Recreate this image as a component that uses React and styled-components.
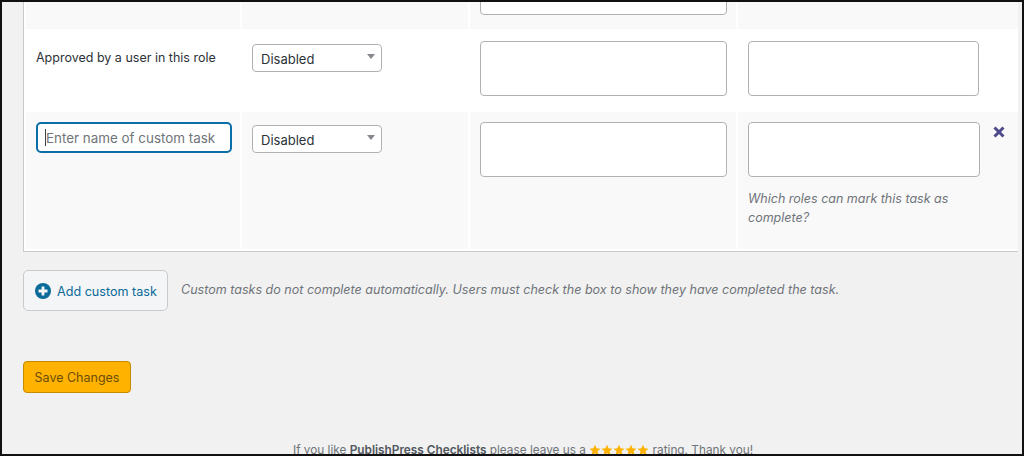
import React from 'react';
import styled, { createGlobalStyle } from 'styled-components';

const GlobalStyle = createGlobalStyle`
  html, body {
    margin: 0;
    padding: 0;
    background: #f1f1f1;
  }
`

const Frame = styled.div`
  box-sizing: border-box;
  width: 1024px;
  height: 456px;
  border: 2px solid #111;
  padding: 0 2px 0 21px;
  overflow: hidden;
  background: #f1f1f1;
  font-family: Inter, "Liberation Sans", sans-serif;
  font-size: 13px;
  color: #3c434a;
`

const Table = styled.div`
  background: #fff;
  border-left: 1px solid #c9cacc;
  border-bottom: 1px solid #c9cacc;
  margin-right: 2px;
  padding: 0 0 2px 2px;
`

const Row = styled.div`
  display: grid;
  grid-template-columns: 214px 226px 266px 280px;
  column-gap: 2px;
  height: ${props => props.height}px;
`

const Cell = styled.div`
  box-sizing: border-box;
  position: relative;
  min-width: 0;
  padding: ${props => props.top || 10}px 10px 0;
  background: ${props => props.shaded ? '#f9f9f9' : '#fff'};
  overflow: hidden;
`

const ClippedCell = styled(Cell)`
  display: flex;
  align-items: flex-end;
  padding: 0 10px 14px;
`

const Label = styled.div`
  padding-top: 8px;
  line-height: 17px;
  font-size: 12.5px;
  color: #2c3338;
`

const FieldWrap = styled.div`
  position: relative;
  width: 196px;

  &::after {
    content: "";
    position: absolute;
    left: 9px;
    top: 7px;
    width: 1px;
    height: 17px;
    background: #3c434a;
  }
`

const NameInput = styled.input`
  box-sizing: border-box;
  display: block;
  width: 100%;
  height: 31px;
  padding: 1px 6px 0 8px;
  border: 2px solid #0a6ea8;
  border-radius: 5px;
  background: #fff;
  font: 13.4px Inter, "Liberation Sans", sans-serif;
  outline: none;

  &::placeholder {
    color: #6f7479;
    opacity: 1;
  }
`

const SelectBox = styled.div`
  box-sizing: border-box;
  position: relative;
  display: flex;
  align-items: center;
  width: 130px;
  height: 28px;
  margin-top: 3px;
  padding: 2px 8px 0;
  border: 1px solid #afb2b5;
  border-radius: 4px;
  background: #fff;
  font-size: 13px;
  color: #2c3338;
`

const Arrow = styled.span`
  position: absolute;
  right: 6px;
  top: 9px;
  width: 0;
  height: 0;
  border-left: 4px solid transparent;
  border-right: 4px solid transparent;
  border-top: 5px solid #85898d;
`

const TextBox = styled.div`
  box-sizing: border-box;
  flex: none;
  width: ${props => props.width}px;
  height: 55px;
  border: 1px solid #afb2b5;
  border-radius: 4px;
  background: #fff;
`

const Hint = styled.p`
  margin: 12px 0 0;
  width: 215px;
  font-size: 12.5px;
  font-style: italic;
  line-height: 19px;
  color: #6f7479;
`

const RemoveButton = styled.svg`
  position: absolute;
  left: 255px;
  top: 14px;
  width: 12px;
  height: 12px;
`

const ActionRow = styled.div`
  display: flex;
  align-items: center;
  gap: 13px;
  margin-top: 18px;
`

const AddButton = styled.button`
  box-sizing: border-box;
  display: flex;
  align-items: center;
  gap: 6px;
  width: 145px;
  height: 41px;
  padding: 0 0 0 11px;
  border: 1px solid #c9cacc;
  border-radius: 5px;
  background: #f3f5f6;
  font: 12.6px Inter, "Liberation Sans", sans-serif;
  color: #0a6a98;
`

const AddLabel = styled.span`
  padding-top: 2px;
`

const Note = styled.span`
  margin-bottom: 2px;
  font-size: 12.55px;
  font-style: italic;
  color: #6f7479;
`

const SaveButton = styled.button`
  box-sizing: border-box;
  display: block;
  width: 108px;
  height: 32px;
  margin-top: 50px;
  padding: 0;
  border: 1px solid #c68a00;
  border-radius: 4px;
  background: #ffb300;
  font: 12.5px Inter, "Liberation Sans", sans-serif;
  color: #6b4d0a;
`

const Footer = styled.div`
  margin-top: 49px;
  padding-left: 270px;
  font-size: 11.8px;
  line-height: 16px;
  color: #6f7479;
  white-space: nowrap;

  b {
    font-weight: 600;
    color: #50575e;
  }
`

const Stars = styled.span`
  display: inline-flex;
  vertical-align: -2px;
`

function Star() {
  return (
    <svg width="12" height="12" viewBox="0 0 24 24" fill="#ffb300">
      <path d="M12 1.5l3.2 7 7.6.9-5.6 5.2 1.500 7.600L12 18.400l-6.700 3.800 1.500-7.600L1.200 9.400l7.600-.900z" />
    </svg>
  )
}

function PlusCircle() {
  return (
    <svg width="16" height="16" viewBox="0 0 16 16">
      <circle cx="8" cy="8" r="8" fill="#0a6a98" />
      <path d="M6.600 3.500h2.800v3.100h3.100v2.800H9.400v3.100H6.600V9.400H3.500V6.600h3.100z" fill="#f3f5f6" />
    </svg>
  )
}

function DisabledSelect() {
  return (
    <SelectBox>
      Disabled
      <Arrow />
    </SelectBox>
  )
}

function App() {
  return (
    <Frame>
      <GlobalStyle />
      <Table>
        <Row height={27}>
          <Cell shaded />
          <Cell shaded />
          <ClippedCell shaded>
            <TextBox width={247} />
          </ClippedCell>
          <Cell shaded />
        </Row>
        <Row height={83}>
          <Cell top={12}>
            <Label>Approved by a user in this role</Label>
          </Cell>
          <Cell top={12}>
            <DisabledSelect />
          </Cell>
          <Cell top={12}>
            <TextBox width={247} />
          </Cell>
          <Cell top={12}>
            <TextBox width={231} />
          </Cell>
        </Row>
        <Row height={137}>
          <Cell shaded>
            <FieldWrap>
              <NameInput placeholder="Enter name of custom task" />
            </FieldWrap>
          </Cell>
          <Cell shaded>
            <DisabledSelect />
          </Cell>
          <Cell shaded>
            <TextBox width={247} />
          </Cell>
          <Cell shaded>
            <TextBox width={232} />
            <Hint>Which roles can mark this task as complete?</Hint>
            <RemoveButton viewBox="0 0 12 12">
              <path d="M1.500 1.500l9 9M10.500 1.500l-9 9" stroke="#4f4a8c" strokeWidth="3" />
            </RemoveButton>
          </Cell>
        </Row>
      </Table>
      <ActionRow>
        <AddButton>
          <PlusCircle />
          <AddLabel>Add custom task</AddLabel>
        </AddButton>
        <Note>Custom tasks do not complete automatically. Users must check the box to show they have completed the task.</Note>
      </ActionRow>
      <SaveButton>Save Changes</SaveButton>
      <Footer>
        If you like <b>PublishPress Checklists</b> please leave us a{' '}
        <Stars>
          <Star /><Star /><Star /><Star /><Star />
        </Stars>
        {' '}rating. Thank you!
      </Footer>
    </Frame>
  )
}

export default App;
